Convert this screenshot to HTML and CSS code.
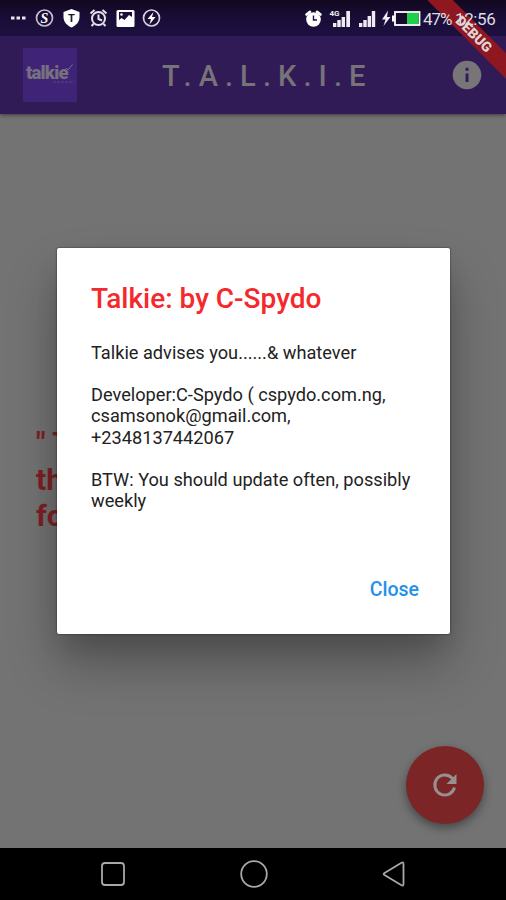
FILE: index.html
```html
<!DOCTYPE html>
<html lang="en">
<head>
    <meta charset="utf-8">
    <title>Talkie</title>
    <link rel="stylesheet" href="styles.css">
</head>
<body>
    <div class="phone">
        <div class="status-bar">
            <svg class="status-icons" width="506" height="36" viewBox="0 0 506 36">
                <g fill="#e8e6ee">
                    <rect x="11" y="16.5" width="3.500" height="3"/>
                    <rect x="16.5" y="16.5" width="3.500" height="3"/>
                    <rect x="22" y="16.5" width="3.500" height="3"/>
                </g>
                <circle cx="44.5" cy="18" r="8" fill="none" stroke="#c5c2cf" stroke-width="1.7"/>
                <text class="badge-s" x="44.5" y="23" text-anchor="middle">S</text>
                <path d="M71.5 9L79.5 12V17C79.5 22 76 25.5 71.5 27.5C67 25.5 63.500 22 63.500 17V12Z" fill="#fff"/>
                <text class="badge-t" x="71.500" y="21.500" text-anchor="middle">T</text>
                <g fill="none" stroke="#e4e2ea" stroke-width="2">
                    <circle cx="98.500" cy="18.500" r="6.500"/>
                    <path d="M90.500 13.500L94.500 10M106.500 13.500L102.500 10M93.500 24L91.500 26M103.500 24L105.500 26M98.500 14.500V19L102 20.500"/>
                </g>
                <rect x="116.500" y="10" width="18" height="17" rx="1.500" fill="#fff"/>
                <path d="M119 12H132V17L129 15L124.500 20L121.500 18L119 20Z" fill="#1c103b"/>
                <circle cx="121.500" cy="14.500" r="1.300" fill="#fff"/>
                <circle cx="151.500" cy="18" r="8" fill="none" stroke="#d5d2dd" stroke-width="1.700"/>
                <path d="M153.500 12L147.500 19H151L149.500 24.500L155.500 17H152Z" fill="#fff"/>

                <circle cx="313.500" cy="19.500" r="7.300" fill="#fff"/>
                <path d="M306.500 14.500L310 11.800M320.500 14.500L317 11.800" stroke="#fff" stroke-width="2.600" stroke-linecap="round"/>
                <path d="M313.500 15.500V20H317" fill="none" stroke="#1c103b" stroke-width="1.400"/>
                <text class="net" x="329.500" y="16">4G</text>
                <g fill="#eeecf2">
                    <path d="M333 23h3.400v4h-3.400zM337.300 20h3.400v7h-3.400zM341.600 17h3.400v10h-3.400zM346.300 11h3.700v16h-3.700z"/>
                    <path d="M359 23h3.400v4h-3.400zM363.300 20h3.400v7h-3.400zM367.600 16h3.400v11h-3.400zM371.800 11h3.400v16h-3.400z"/>
                    <path d="M388 10.500L382 19.500H385.500L383.500 26L390.500 17H387Z"/>
                </g>
                <rect x="395" y="12" width="24.500" height="13" fill="#160a2d" stroke="#fff" stroke-width="1.800"/>
                <rect x="392" y="15.500" width="2.500" height="6" fill="#fff"/>
                <rect x="407" y="13" width="11.500" height="11" fill="#1fd04b"/>
            </svg>
            <div class="debug-banner">DEBUG</div>
            <span class="battery-text">47%</span>
            <span class="clock">12:56</span>
        </div>

        <div class="app-bar">
            <div class="logo">
                <span class="logo-name">talkie</span>
                <svg class="logo-mark" width="54" height="54" viewBox="0 0 54 54">
                    <path d="M43 20L45 22L49.500 16.500" fill="none" stroke="#777080" stroke-width="1"/>
                    <path d="M30 34H51" stroke="#5d477c" stroke-width="1" stroke-dasharray="3 1"/>
                </svg>
            </div>
            <h1 class="app-title">T.A.L.K.I.E</h1>
            <svg class="info" width="30" height="30" viewBox="0 0 30 30">
                <circle cx="15" cy="15" r="14.300" fill="#777577"/>
                <path d="M13.600 7.800h2.900v2.900h-2.900zM13.600 13.500h2.900v8.600h-2.900z" fill="#301b57"/>
            </svg>
        </div>

        <div class="content">
            <div class="quote">" T<br>th<br>fo</div>
            <div class="dialog">
                <h2>Talkie: by C-Spydo</h2>
                <p>Talkie advises you......&amp; whatever</p>
                <p>Developer:C-Spydo ( cspydo.com.ng,<br>csamsonok@gmail.com,<br>+2348137442067</p>
                <p>BTW: You should update often, possibly<br>weekly</p>
                <button class="close">Close</button>
            </div>
            <div class="fab">
                <svg width="40" height="40" viewBox="0 0 40 40">
                    <path d="M29.500 22.500A10 10 0 1 1 27 13L29 15" fill="none" stroke="#969092" stroke-width="3"/>
                    <path d="M31.500 9V19H21.500Z" fill="#969092"/>
                </svg>
            </div>
        </div>

        <div class="nav-bar">
            <svg width="30" height="30" viewBox="0 0 30 30">
                <rect x="4" y="4" width="22" height="22" rx="3"/>
            </svg>
            <svg width="30" height="30" viewBox="0 0 30 30">
                <circle cx="15" cy="15" r="12.800"/>
            </svg>
            <svg width="30" height="30" viewBox="0 0 30 30">
                <path d="M5.500 14L22.500 3.700Q24.500 2.800 24.500 5V25Q24.500 27.200 22.500 26.300L5.500 16Q4 15 5.500 14Z"/>
            </svg>
        </div>
    </div>
</body>
</html>
```
FILE: styles.css
```css
body {
    margin: 0;
    background-color: #000;
    font-family: Roboto, sans-serif;
}
.phone {
    display: flex;
    flex-direction: column;
    width: 506px;
    height: 900px;
    overflow: hidden;
}
.status-bar {
    position: relative;
    z-index: 2;
    display: flex;
    justify-content: flex-end;
    align-items: center;
    box-sizing: border-box;
    height: 36px;
    padding: 2px 10px 0 0;
    background: linear-gradient(#12081f, #190c35 40%, #1d1040);
    color: #dedbe4;
    font-size: 17px;
}
.status-icons {
    position: absolute;
    top: 0;
    left: 0;
}
.battery-text, .clock {
    position: relative;
    white-space: nowrap;
}
.battery-text {
    width: 28px;
    margin-right: 4px;
    letter-spacing: -1px;
}
.clock {
    width: 41px;
    letter-spacing: -0.4px;
}
.badge-s {
    font: italic bold 14px "Liberation Serif", serif;
    fill: #fff;
}
.badge-t {
    font: bold 11px Roboto, sans-serif;
    fill: #1c103b;
}
.net {
    font: bold 8px Roboto, sans-serif;
    fill: #eee;
}
.debug-banner {
    position: absolute;
    top: 25px;
    left: 404px;
    width: 140px;
    height: 18px;
    background-color: #8e1720;
    color: #ded5d8;
    font-size: 14px;
    font-weight: 900;
    line-height: 18px;
    text-align: center;
    transform: rotate(45deg);
}
.app-bar {
    position: relative;
    z-index: 1;
    display: flex;
    align-items: center;
    box-sizing: border-box;
    height: 78px;
    padding: 0 24px 0 23px;
    background-color: #301b57;
    box-shadow: 0 1px 4px rgba(0, 0, 0, 0.5);
}
.logo {
    position: relative;
    width: 54px;
    height: 54px;
    background-color: #3f2376;
}
.logo-name {
    display: block;
    padding-left: 3px;
    color: #777080;
    font-size: 18.5px;
    font-weight: 900;
    letter-spacing: -0.8px;
    line-height: 50px;
}
.logo-mark {
    position: absolute;
    top: 0;
    left: 0;
}
.app-title {
    flex: 1;
    margin: 2px 0 0 85px;
    color: #777378;
    font-size: 29px;
    font-weight: 500;
    letter-spacing: 7.1px;
    white-space: nowrap;
}
.content {
    position: relative;
    height: 734px;
    background-color: #737373;
}
.quote {
    padding: 311px 0 0 36px;
    color: #7e2124;
    font-size: 30px;
    font-weight: bold;
    line-height: 36.7px;
}
.dialog {
    position: absolute;
    top: 134px;
    left: 57px;
    box-sizing: border-box;
    width: 393px;
    height: 386px;
    padding: 34px 23px 21px 34px;
    display: flex;
    flex-direction: column;
    background-color: #fff;
    border-radius: 2px;
    box-shadow: 0 0 2px rgba(0, 0, 0, 0.7), 0 30px 50px rgba(0, 0, 0, 0.28), 0 14px 24px -4px rgba(0, 0, 0, 0.12);
    color: #222;
    font-size: 18.2px;
    line-height: 21.2px;
}
.dialog h2 {
    margin: 0 0 27px;
    color: #f5282c;
    font-size: 28px;
    font-weight: 500;
    line-height: 33px;
}
.dialog p {
    margin: 0 0 21px;
    white-space: nowrap;
}
.close {
    align-self: flex-end;
    margin: auto 0 0;
    padding: 12px 8px;
    border: none;
    background: none;
    color: #2490eb;
    font: 500 19.500px/22px Roboto, sans-serif;
}
.fab {
    position: absolute;
    top: 632px;
    left: 406px;
    display: flex;
    align-items: center;
    justify-content: center;
    width: 78px;
    height: 78px;
    border-radius: 50%;
    background-color: #7b2527;
    box-shadow: 0 4px 10px rgba(0, 0, 0, 0.4);
}
.nav-bar {
    display: flex;
    justify-content: space-between;
    align-items: center;
    height: 52px;
    padding: 0 97px 0 98px;
    background-color: #000;
}
.nav-bar svg {
    fill: none;
    stroke: #a8a8a8;
    stroke-width: 1.8;
}
```
